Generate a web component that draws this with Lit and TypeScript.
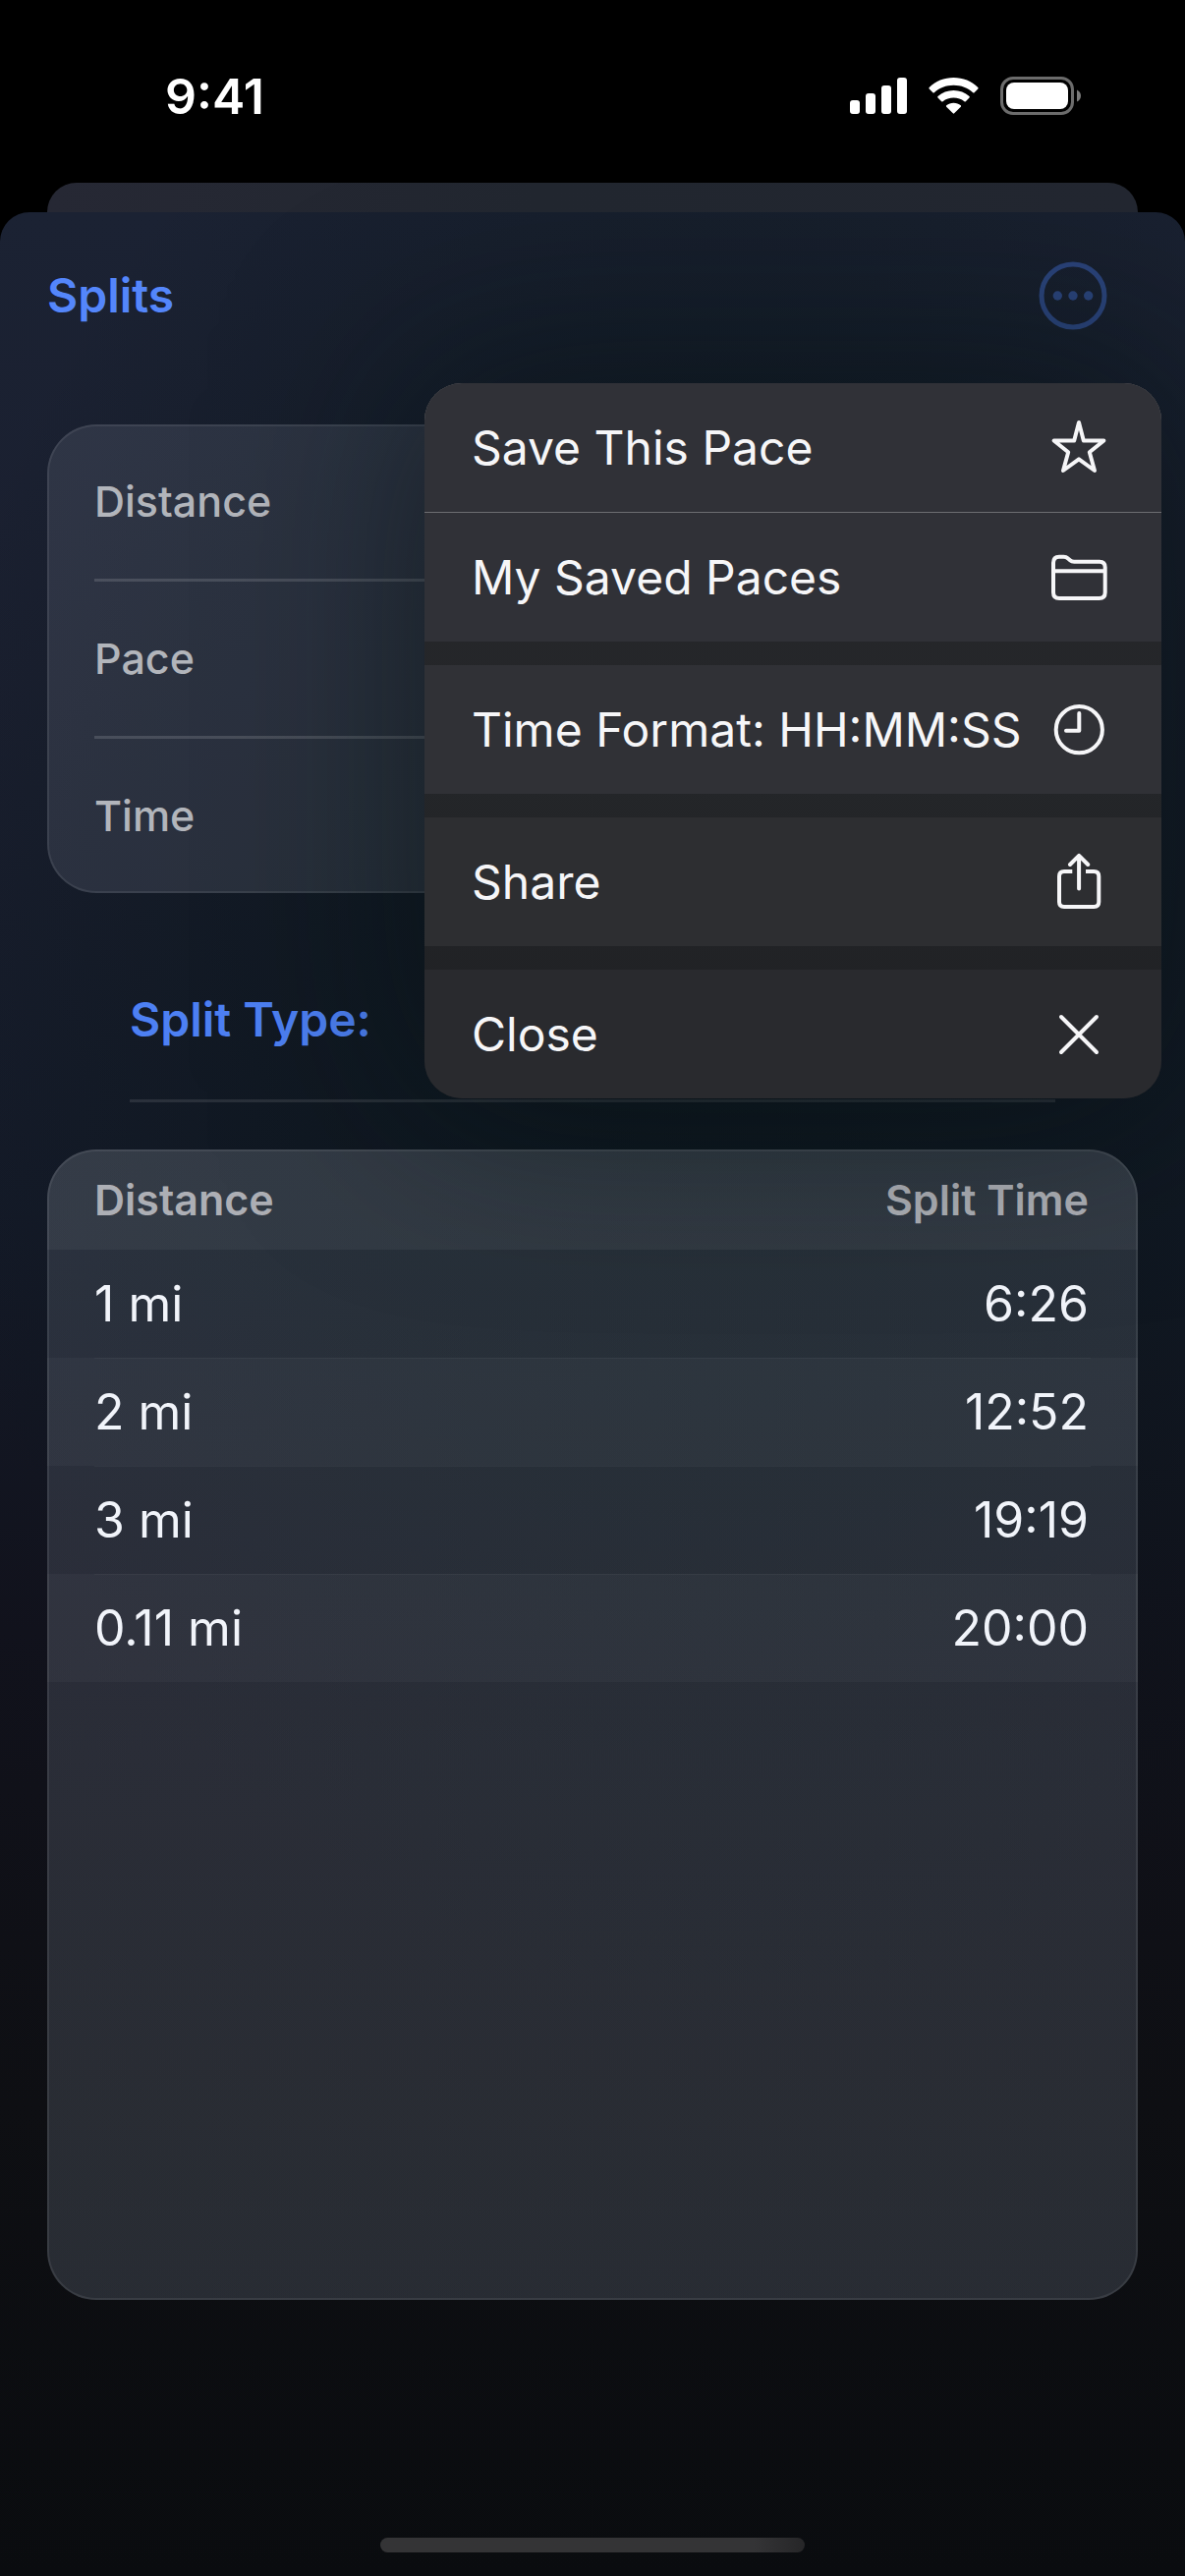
import { LitElement, html, css, svg } from "lit";
import { customElement } from "lit/decorators.js";

interface MenuItem {
  label: string;
  icon: unknown;
}

const star = svg`<path d="M30 4L34.8 22.5H55.4L40.8 34.2L46 53L30 41.4L14 53L19.2 34.2L4.6 22.5H25.2Z" />`;
const folder = svg`<path d="M4 45V15Q4 8.7 10 8.7H14.500Q17 8.700 19 10.500L21 12.200Q22.700 13.800 25.200 13.800H51Q56.700 13.800 56.700 19.500V45Q56.700 51 50.700 51H10Q4 51 4 45ZM4 23.300H56.700" />`;
const clock = svg`<circle cx="30.300" cy="29.700" r="23.600" /><path d="M30.300 13V30.700H17" />`;
const share = svg`<path class="butt" d="M23.300 19H15Q10 19 10 24V50Q10 55 15 55H45.300Q50.300 55 50.300 50V24Q50.300 19 45.300 19H37" /><path d="M30.100 36.500V3M21 12L30.100 2.800L39.200 12" />`;
const cross = svg`<path d="M12 12L48 48M48 12L12 48" />`;

const MENU: MenuItem[][] = [
  [
    { label: "Save This Pace", icon: star },
    { label: "My Saved Paces", icon: folder },
  ],
  [{ label: "Time Format: HH:MM:SS", icon: clock }],
  [{ label: "Share", icon: share }],
  [{ label: "Close", icon: cross }],
];

const FIELDS = ["Distance", "Pace", "Time"];

const SPLITS: [string, string][] = [
  ["1 mi", "6:26"],
  ["2 mi", "12:52"],
  ["3 mi", "19:19"],
  ["0.11 mi", "20:00"],
];

@customElement("status-bar")
export class StatusBar extends LitElement {
  static styles = css`
    :host {
      display: flex;
      align-items: center;
      justify-content: space-between;
      height: 64px;
      padding: 66px 106px 56px 168px;
      color: #fff;
    }
    .time {
      font-size: 50px;
      line-height: 64px;
      font-weight: 600;
    }
    .icons {
      display: flex;
      align-items: center;
      gap: 22px;
    }
    svg {
      display: block;
    }
  `;

  render() {
    return html`
      <span class="time">9:41</span>
      <div class="icons">
        <svg width="58" height="38" viewBox="0 0 58 38" fill="#fff" aria-hidden="true">
          <rect x="0" y="23" width="10" height="14" rx="3" />
          <rect x="16" y="16" width="10" height="21" rx="3" />
          <rect x="32" y="8" width="10" height="29" rx="3" />
          <rect x="48" y="0" width="10" height="37" rx="3" />
        </svg>
        <svg width="51" height="38" viewBox="0 0 51 38" fill="#fff" aria-hidden="true">
          <path d="M25.500 0C35 0 44 3.500 50.300 10Q51 10.700 50.300 11.500L46.600 15.200Q46 15.800 45.200 15.200C40 10.500 33 7.800 25.500 7.800S11 10.500 5.800 15.200Q5 15.800 4.400 15.200L.7 11.500Q0 10.700 .7 10C7 3.500 16 0 25.500 0Z" />
          <path d="M25.500 13C31.500 13 37.200 15.200 41.500 19.100Q42.200 19.800 41.500 20.500L37.800 24.200Q37.200 24.800 36.400 24.200C33.400 21.800 29.600 20.500 25.500 20.500S17.600 21.800 14.600 24.200Q13.800 24.800 13.200 24.200L9.500 20.500Q8.800 19.800 9.500 19.100C13.800 15.200 19.500 13 25.500 13Z" />
          <path d="M25.500 25.800C28.300 25.800 30.800 26.700 32.800 28.300Q33.500 29 32.800 29.700L26.200 36.300Q25.500 37 24.800 36.300L18.200 29.700Q17.500 29 18.200 28.300C20.200 26.700 22.700 25.800 25.500 25.800Z" />
        </svg>
        <svg width="82" height="40" viewBox="0 0 82 40" aria-hidden="true">
          <rect x="1.500" y="1.500" width="72" height="36" rx="11.500" fill="none" stroke="#6c6c6c" stroke-width="3" />
          <rect x="6" y="6" width="63" height="27" rx="8" fill="#fff" />
          <path d="M78 13.500Q82 15.500 82 19.500T78 25.500Z" fill="#7a7a7a" />
        </svg>
      </div>
    `;
  }
}

@customElement("action-menu")
export class ActionMenu extends LitElement {
  static styles = css`
    :host {
      display: block;
      border-radius: 38px;
      box-shadow: 0 0 200px rgba(6, 16, 20, 0.55);
    }
    .menu {
      display: flex;
      flex-direction: column;
      gap: 24px;
      overflow: hidden;
      border-radius: 38px;
      background: linear-gradient(#27272b, #242629 55%, #1f2023);
    }
    .group {
      display: flex;
      flex-direction: column;
      gap: 1px;
      background: #6c6d71;
    }
    .item {
      display: flex;
      align-items: center;
      justify-content: space-between;
      height: 131px;
      padding: 0 54px 0 48px;
      border: 0;
      background: #303136;
      color: #f6f6f8;
      font: inherit;
      font-size: 48px;
      line-height: 60px;
      text-align: left;
      white-space: nowrap;
    }
    .g0 .item {
      background: #303137;
    }
    .g2 .item {
      background: #2d2e31;
    }
    .g3 .item {
      background: #292a2e;
    }
    svg {
      display: block;
      flex: none;
      fill: none;
      stroke: #f6f6f8;
      stroke-width: 4;
      stroke-linecap: round;
      stroke-linejoin: round;
    }
    .butt {
      stroke-linecap: butt;
    }
  `;

  render() {
    return html`
      <div class="menu" role="menu">
        ${MENU.map(
          (group, i) => html`
            <div class="group g${i}" role="group">
              ${group.map(
                (item) => html`
                  <button class="item" role="menuitem" type="button">
                    <span>${item.label}</span>
                    <svg width="60" height="60" viewBox="0 0 60 60" aria-hidden="true">${item.icon}</svg>
                  </button>
                `
              )}
            </div>
          `
        )}
      </div>
    `;
  }
}

@customElement("app-root")
export class AppRoot extends LitElement {
  static styles = css`
    :host {
      display: flex;
      flex-direction: column;
      min-height: 100vh;
      background: #000;
      font-family: Inter, "Liberation Sans", sans-serif;
    }
    .back-sheet {
      height: 30px;
      margin: 0 48px;
      border-radius: 30px 30px 0 0;
      background: linear-gradient(90deg, #262834, #222730 45%, #232731);
    }
    .sheet {
      display: flex;
      flex: 1;
      flex-direction: column;
      border-radius: 30px 30px 0 0;
      background:
        radial-gradient(
          70% 45% at 62% 32%,
          rgba(8, 20, 22, 0.6),
          rgba(8, 20, 22, 0.4) 50%,
          rgba(8, 20, 22, 0)
        ),
        linear-gradient(
          #1b2233,
          #1a1f2f 20%,
          #141a28 42%,
          #11121c 60%,
          #0e0f13 80%,
          #0a0c0f
        );
    }
    .top {
      position: relative;
      display: flex;
      align-items: center;
      justify-content: space-between;
      height: 170px;
      padding: 0 78px 0 48px;
    }
    h1 {
      margin: 0;
      color: #5486fb;
      font-size: 48px;
      line-height: 60px;
      font-weight: 600;
    }
    .more {
      padding: 0;
      border: 0;
      background: none;
    }
    .more svg {
      display: block;
    }
    .popover {
      position: absolute;
      z-index: 1;
      top: 174px;
      right: 24px;
      width: 750px;
    }
    .content {
      display: flex;
      flex: 1;
      flex-direction: column;
      gap: 48px;
      padding: 46px 48px 0;
    }
    .card {
      border-radius: 50px;
      box-shadow: inset 0 0 0 2px rgba(255, 255, 255, 0.08);
    }
    .fields {
      padding: 0 48px;
      background: rgba(170, 176, 192, 0.15);
    }
    .field {
      border-bottom: 3px solid rgba(255, 255, 255, 0.14);
      color: #b2b5bb;
      font-size: 43px;
      line-height: 157px;
      font-weight: 500;
    }
    .field:last-child {
      border-bottom: 0;
    }
    .split-type {
      margin: 0 84px;
      border-bottom: 3px solid rgba(255, 255, 255, 0.1);
      color: #4d80f3;
      font-size: 48px;
      line-height: 162px;
      font-weight: 600;
    }
    .splits {
      flex: 1;
      overflow: hidden;
      background: linear-gradient(rgba(165, 175, 188, 0.16), rgba(160, 175, 198, 0.19));
    }
    table {
      width: 100%;
      border-collapse: collapse;
    }
    th,
    td {
      padding: 0 50px 0 48px;
      text-align: left;
    }
    th:last-child,
    td:last-child {
      text-align: right;
    }
    thead tr {
      height: 102px;
      background: rgba(255, 255, 255, 0.05);
    }
    th {
      color: #adafb5;
      font-size: 43px;
      line-height: 60px;
      font-weight: 600;
    }
    tbody tr {
      height: 110px;
    }
    tbody tr + tr {
      background: linear-gradient(rgba(255, 255, 255, 0.04), rgba(255, 255, 255, 0.04)) no-repeat
        48px 0 / calc(100% - 96px) 1px;
    }
    tbody tr:nth-child(even) {
      background-color: rgba(255, 255, 255, 0.03);
    }
    td {
      color: #f1f4fa;
      font-size: 50px;
      line-height: 60px;
    }
    .home {
      width: 432px;
      height: 15px;
      margin: 242px auto 24px;
      border-radius: 8px;
      background: linear-gradient(90deg, #343436 88%, #262628);
    }
  `;

  render() {
    return html`
      <status-bar></status-bar>
      <div class="back-sheet"></div>
      <main class="sheet">
        <header class="top">
          <h1>Splits</h1>
          <button class="more" type="button" aria-label="More" aria-haspopup="menu" aria-expanded="true">
            <svg width="72" height="72" viewBox="0 0 72 72" aria-hidden="true">
              <circle cx="36" cy="36" r="32" fill="none" stroke="#2a4379" stroke-width="5" />
              <g fill="#2a4379">
                <circle cx="20.300" cy="36" r="4.700" />
                <circle cx="36" cy="36" r="4.700" />
                <circle cx="51.700" cy="36" r="4.700" />
              </g>
            </svg>
          </button>
          <action-menu class="popover"></action-menu>
        </header>
        <div class="content">
          <section class="card fields">
            ${FIELDS.map((name) => html`<div class="field">${name}</div>`)}
          </section>
          <div class="split-type">Split Type:</div>
          <section class="card splits">
            <table>
              <thead>
                <tr>
                  <th scope="col">Distance</th>
                  <th scope="col">Split Time</th>
                </tr>
              </thead>
              <tbody>
                ${SPLITS.map(
                  ([distance, time]) => html`<tr>
                    <td>${distance}</td>
                    <td>${time}</td>
                  </tr>`
                )}
              </tbody>
            </table>
          </section>
        </div>
        <div class="home"></div>
      </main>
    `;
  }
}
